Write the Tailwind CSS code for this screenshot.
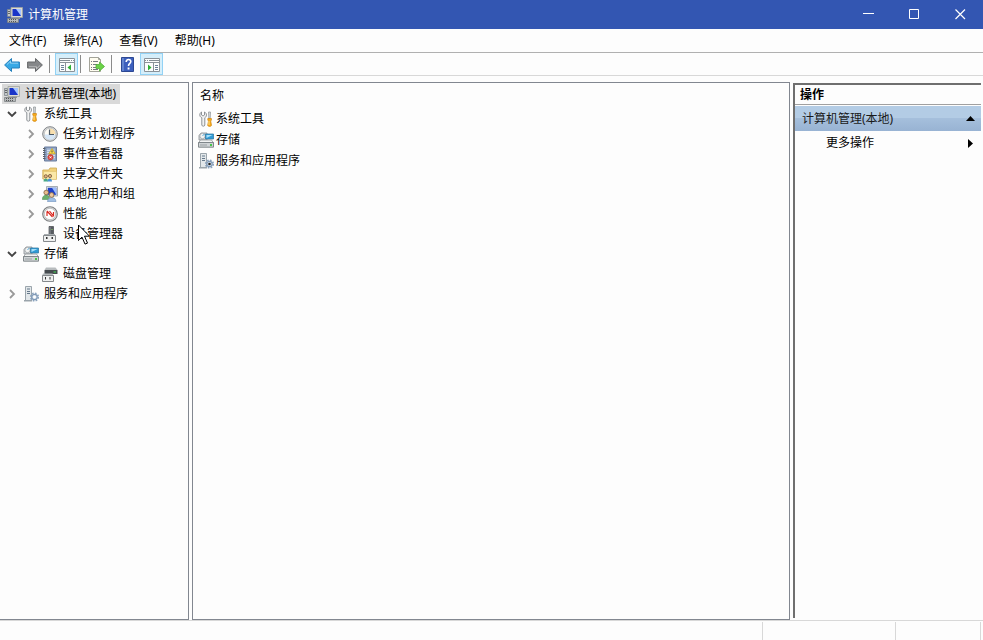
<!DOCTYPE html>
<html lang="zh-CN">
<head>
    <meta charset="UTF-8">
    <meta name="viewport" content="width=device-width, initial-scale=1.0">
    <title>计算机管理</title>
    <script src="https://cdn.jsdelivr.net/npm/@tailwindcss/browser@4"></script>
    <style>
        body { font-family: 'Noto Sans', 'Noto Sans CJK SC', sans-serif; }
    </style>
</head>
<body class="h-screen flex flex-col overflow-hidden bg-[#fdfdfd] text-black text-xs leading-5 cursor-default select-none">

    <!-- Icon set -->
    <svg class="hidden">
        <symbol id="computer" viewBox="0 0 16 16">
            <path d="M.5 2.500h3v7h-3z" fill="#c3c8cb" stroke="#7d858b" stroke-width=".8"/>
            <path d="M1 4.500h2M1 6.500h2" stroke="#666"/>
            <path d="M4 .5h11.500v10H4z" fill="#dddcd2" stroke="#a0a39f" stroke-width=".8"/>
            <path d="M5.500 2h8.500v7H5.500z" fill="#1a35c8"/>
            <path d="M9 2h5v7z" fill="#a3c4ff"/>
            <path d="M8 10.500h5v1.500H8z" fill="#999"/>
            <path d="M.5 11.500h11v4H.5z" fill="#b4b8ba" stroke="#7b8083" stroke-width=".8"/>
            <path d="M2 12.500h1m1 0h1m1 0h1m1 0h1M2 14.500h1m1 0h1m1 0h1m1 0h1" stroke="#555"/>
        </symbol>
        <symbol id="tools" viewBox="0 0 16 16">
            <path d="M3.500 1v3l1.500 1 1.500-1V1C8 1.800 8.500 2.800 8.500 4S7.700 6.300 6.800 6.800V14c0 1.600-3 1.600-3 0V6.800C2.500 6.200 1.800 5.200 1.800 4S2.200 1.800 3.500 1z" fill="#f1f2f2" stroke="#83888c" stroke-width=".9"/>
            <path d="M10.500 1h2l-.3 6.500h-1.400z" fill="#d8dbdd" stroke="#8b9094" stroke-width=".7"/>
            <path d="M9.800 7.500h3.600V9l-.7 1 .8 4.300c0 1.500-3.800 1.500-3.800 0l.8-4.300-.7-1z" fill="#f9ac1c" stroke="#cd8411" stroke-width=".7"/>
            <path d="M11 10v4" stroke="#ffe08a"/>
        </symbol>
        <symbol id="clock" viewBox="0 0 16 16">
            <circle cx="8" cy="8" r="7.300" fill="#dcdedf" stroke="#808487"/>
            <circle cx="8" cy="8" r="5.700" fill="#fffdf6" stroke="#aaadaf" stroke-width=".6"/>
            <path d="M8 8.500h5.300A5.300 5.300 0 0 1 2.700 8.500z" fill="#d5e6f6"/>
            <path d="M8 8V2.500A5.500 5.500 0 0 1 13.500 8z" fill="#f8dfae"/>
            <path d="M7.500 3.500v5H12" fill="none" stroke="#4c5964" stroke-width="1.200"/>
        </symbol>
        <symbol id="events" viewBox="0 0 16 16">
            <path d="M2.500 1h12v14h-12z" fill="#8ba1c2" stroke="#6b7d9d"/>
            <path d="M5 2.500h8v11H5z" fill="#a9bbd6"/>
            <path d="M5 4.500h4M5 6.500h3M5 9.500h8M5 11.500h8" stroke="#dce6f3" stroke-width=".8"/>
            <path d="M1 2.500h2.500M1 4.500h2.500M1 6.500h2.500M1 8.500h2.500M1 10.500h2.500M1 12.500h2.500" stroke="#596069"/>
            <path d="M10 2.500l3.300 5.300H6.700z" fill="#ffdf45" stroke="#c7a11b" stroke-width=".7"/>
            <path d="M10 4.500v2" stroke="#444"/>
            <circle cx="8.500" cy="11.300" r="2.700" fill="#df453d" stroke="#b52c26" stroke-width=".5"/>
            <path d="M7.500 10.300l2 2m0-2l-2 2" stroke="#fff" stroke-width=".9"/>
        </symbol>
        <symbol id="shared" viewBox="0 0 16 16">
            <path d="M.8 4h6l1.200-2h6.500v11H.8z" fill="#f1d17a" stroke="#cda850" stroke-width=".8"/>
            <path d="M1.500 5.500h13v8h-13z" fill="#fbe8a8" stroke="#d9ba67" stroke-width=".5"/>
            <path d="M1.500 15.500c0-4 4.500-4 4.500 0z" fill="#49a985"/>
            <path d="M5.500 15.500c0-4 4.500-4 4.500 0z" fill="#4a93d6"/>
            <circle cx="3.800" cy="10.300" r="1.600" fill="#e3b17c" stroke="#75583a" stroke-width=".8"/>
            <circle cx="8" cy="10" r="1.600" fill="#e3b17c" stroke="#75583a" stroke-width=".8"/>
        </symbol>
        <symbol id="users" viewBox="0 0 16 16">
            <path d="M4.500.5h11v9.500h-11z" fill="#dde1e5" stroke="#929ca5" stroke-width=".8"/>
            <path d="M5.800 1.800h8.500v7H5.800z" fill="#1e40c8"/>
            <path d="M10 1.800h4.300v7z" fill="#9bbdfb"/>
            <path d="M.3 13.500c0-6 7.500-6 7.500 0z" fill="#6bb06c" stroke="#46844b" stroke-width=".5"/>
            <circle cx="4.200" cy="6.500" r="2.300" fill="#e8bd8c" stroke="#80603f" stroke-width=".8"/>
            <path d="M5.500 15.700c0-5.500 8.500-5.500 8.500 0z" fill="#a0bfe4" stroke="#6385ae" stroke-width=".5"/>
            <circle cx="9.600" cy="9" r="2.400" fill="#ecc79c" stroke="#80603f" stroke-width=".8"/>
        </symbol>
        <symbol id="perf" viewBox="0 0 16 16">
            <circle cx="8" cy="8" r="7.300" fill="#e3e4e4" stroke="#7a7d7f" stroke-width="1.100"/>
            <circle cx="8" cy="8" r="5.700" fill="#fff" stroke="#a0a2a3" stroke-width=".6"/>
            <path d="M5 10V5.500M5 5l5.500 6M7.500 5l4 5M11.500 6v4.500" fill="none" stroke="#da2a22" stroke-width="1.200"/>
        </symbol>
        <symbol id="device" viewBox="0 0 16 16">
            <path d="M7 .5h4.500v9H7z" fill="#565b60" stroke="#34383b" stroke-width=".6"/>
            <path d="M7.500 1h1v8h-1z" fill="#8b9298"/>
            <path d="M9.500 3h1v1h-1z" fill="#8fdf63"/>
            <path d="M2 8h11v2H2z" fill="#a8adb0"/>
            <path d="M1.500 9.500h12v6h-12z" fill="#eff0f0" stroke="#85898c"/>
            <path d="M4 11h1.500v2H4zM9.500 11H11v2H9.500z" fill="#333"/>
        </symbol>
        <symbol id="storage" viewBox="0 0 16 16">
            <path d="M1 3.500L3 1h6v7H1z" fill="#dadddf" stroke="#858c90" stroke-width=".8"/>
            <circle cx="4.500" cy="4" r="2.700" fill="#f2f3f3" stroke="#92989b" stroke-width=".7"/>
            <path d="M4.500 4l2-2.300" stroke="#5fb1dd"/>
            <path d="M7.500 2h8v5h-8z" fill="#2e9bd6" stroke="#347ba5" stroke-width=".8"/>
            <path d="M8.500 3h6L8.500 6z" fill="#a5dff9"/>
            <path d="M2.500 8h11l2 3h-15z" fill="#f3f4f4" stroke="#858b8e" stroke-width=".7"/>
            <path d="M.5 10.500h15v4.700H.5z" fill="#d0d4d6" stroke="#777e82" stroke-width=".9"/>
            <path d="M2 13h7" stroke="#9ba1a4"/>
            <path d="M12 12h2v2h-2z" fill="#47c649"/>
        </symbol>
        <symbol id="disk" viewBox="0 0 16 16">
            <path d="M4 1.500h9.500L15.500 4H2.500z" fill="#b8bcbe"/>
            <path d="M2.500 4h13v4h-13z" fill="#464b4f"/>
            <path d="M11.500 5.500H14v1h-2.500z" fill="#43dc55"/>
            <path d="M1 7.500h9.500l1 2.500H0z" fill="#b4b9bb"/>
            <path d="M.5 9.500h11v6H.5z" fill="#eff0f0" stroke="#85898c"/>
            <path d="M3 11h1v2.500H3zM7.500 11h1v2.500h-1z" fill="#333"/>
        </symbol>
        <symbol id="services" viewBox="0 0 16 16">
            <path d="M2.500.5h6v14h-6z" fill="#e2e7ea" stroke="#919ca4" stroke-width=".9"/>
            <path d="M4 3h3M4 5.500h3M4 7.500h3" stroke="#65788a"/>
            <path d="M1 14h8v1.500H1z" fill="#9aa4ab"/>
            <circle cx="11.500" cy="11" r="3.800" fill="none" stroke="#8ca4bf" stroke-width="1.600" stroke-dasharray="1.700 1.280"/>
            <circle cx="11.500" cy="11" r="2.700" fill="#e2eaf3" stroke="#7f99b6" stroke-width="1.200"/>
            <circle cx="11.500" cy="11" r="1.300" fill="currentColor"/>
        </symbol>
        <symbol id="arrow" viewBox="0 0 16 16">
            <path d="M.6 8L7.500 1.500v3.500h7.900v6H7.500v3.500z" stroke-width="1" stroke-linejoin="round"/>
            <path d="M3 7.500l3.500-3.300v2h7.500" fill="none" stroke="#fff" stroke-opacity=".45"/>
        </symbol>
        <symbol id="pane" viewBox="0 0 16 16">
            <path d="M.5 1.500h15v13H.5z" fill="#fcfdfd" stroke="#8a9299"/>
            <path d="M1 3.500h10" stroke="#848d95"/>
            <path d="M12 3.500h1m1 0h1" stroke="#848d95"/>
            <path d="M1 5.500h14" stroke="#8a9299"/>
            <path d="M6.500 6v8" stroke="#8a9299"/>
            <path d="M2 8.500h3M2 10.500h3M2 12.500h3" stroke="#6c8099"/>
            <path d="M12 7.500v6L8.500 10.500z" fill="#2fb034"/>
        </symbol>
        <symbol id="chevron" viewBox="0 0 10 10">
            <path d="M3 1l4 4-4 4" fill="none" stroke="currentColor" stroke-width="1.800"/>
        </symbol>
    </svg>

    <!-- Title bar -->
    <header class="h-[29px] shrink-0 flex items-center bg-[#3356b2] text-white">
        <svg class="size-4 ml-[7px] mr-[5px]"><use href="#computer"/></svg>
        <h1 class="flex-1">计算机管理</h1>
        <button aria-label="最小化" class="w-[45px] h-full flex items-center justify-center">
            <svg class="size-[11px]" viewBox="0 0 11 11"><path d="M0 4.500h11" stroke="#fff"/></svg>
        </button>
        <button aria-label="最大化" class="w-[46px] h-full flex items-center justify-center">
            <svg class="size-[11px]" viewBox="0 0 11 11"><path d="M.5.5h9v9h-9z" fill="none" stroke="#fff"/></svg>
        </button>
        <button aria-label="关闭" class="w-[46px] h-full flex items-center justify-center">
            <svg class="size-[11px]" viewBox="0 0 11 11"><path d="M.5.5l9.500 9.500m0-9.500l-9.500 9.500" stroke="#fff" stroke-width="1.200"/></svg>
        </button>
    </header>

    <!-- Menu bar -->
    <nav class="h-6 shrink-0 flex items-center gap-[17px] px-[9px] border-b border-[#b0b0b0]">
        <button>文件(F)</button>
        <button>操作(A)</button>
        <button>查看(V)</button>
        <button>帮助(H)</button>
    </nav>

    <!-- Toolbar -->
    <div class="h-[23px] shrink-0 flex items-center pl-1 border-b border-[#d8d8d8]">
        <button aria-label="后退" class="mr-[7px] pt-0.5"><svg class="size-4" fill="#38a9e6" stroke="#2580bd"><use href="#arrow"/></svg></button>
        <button aria-label="前进" class="pt-0.5"><svg class="size-4 rotate-180" fill="#858789" stroke="#67696b"><use href="#arrow"/></svg></button>
        <span class="w-px h-[18px] ml-1.5 mr-[5px] bg-[#8b8b8b]"></span>
        <button aria-label="显示/隐藏控制台树" class="w-[23px] h-[22px] pt-0.5 flex items-center justify-center bg-[#d5eefa] border border-[#92d2f5]">
            <svg class="size-4"><use href="#pane"/></svg>
        </button>
        <span class="w-px h-[18px] ml-0.5 mr-2 bg-[#8b8b8b]"></span>
        <button aria-label="导出列表" class="pt-0.5">
            <svg class="size-4" viewBox="0 0 16 16">
                <path d="M.5.5h9l2 2v12H.5z" fill="#fffdf0" stroke="#a3a399"/>
                <path d="M9.500.5v2h2" fill="none" stroke="#a3a399"/>
                <path d="M2 4.500h1m1 0h5M2 7.500h1m1 0h4M2 10.500h1m1 0h4M2 12.500h1m1 0h5" stroke="#777a80"/>
                <path d="M7 7.500h3.500V5l5 4.500-5 4.500v-2.500H7z" fill="#6bd347" stroke="#50ad37" stroke-width=".8"/>
            </svg>
        </button>
        <span class="w-px h-[18px] ml-1.5 mr-2 bg-[#8b8b8b]"></span>
        <button aria-label="帮助" class="pt-0.5">
            <svg class="size-4" viewBox="0 0 16 16">
                <path d="M1.500.5h12v14h-12z" fill="#3c5fbd" stroke="#2d4893"/>
                <path d="M2 1h2v13H2z" fill="#6384cf"/>
                <path d="M6.200 5c0-3.200 4.600-3.100 4.600-.6 0 2-2.300 2-2.300 4.600" fill="none" stroke="#fff" stroke-width="1.600"/>
                <path d="M7.600 10.500h1.900v2H7.600z" fill="#fff"/>
            </svg>
        </button>
        <button aria-label="显示/隐藏操作窗格" class="ml-1 w-[23px] h-[22px] pt-0.5 flex items-center justify-center bg-[#d5eefa] border border-[#92d2f5]">
            <svg class="size-4 -scale-x-100"><use href="#pane"/></svg>
        </button>
    </div>

    <main class="flex-1 min-h-0 flex pt-1.5">
        <!-- Console tree -->
        <nav class="w-[189px] shrink-0 border-t border-r border-b border-[#828790] pt-px">
            <ul>
                <li>
                    <div class="h-5 flex"><span class="h-5 flex items-center ml-0.5 pl-0.5 pr-1 gap-[5px] bg-[#d9d9d9]"><svg class="size-4"><use href="#computer"/></svg>计算机管理(本地)</span></div>
                    <ul>
                        <li>
                            <div class="h-5 flex items-center pl-[7px]"><svg class="size-2.5 mr-1.5 rotate-90 text-[#444]"><use href="#chevron"/></svg><svg class="size-4 mr-[5px]"><use href="#tools"/></svg>系统工具</div>
                            <ul>
                                <li class="h-5 flex items-center pl-[26px]"><svg class="size-2.5 mr-1.5 text-[#999]"><use href="#chevron"/></svg><svg class="size-4 mr-[5px]"><use href="#clock"/></svg>任务计划程序</li>
                                <li class="h-5 flex items-center pl-[26px]"><svg class="size-2.5 mr-1.5 text-[#999]"><use href="#chevron"/></svg><svg class="size-4 mr-[5px]"><use href="#events"/></svg>事件查看器</li>
                                <li class="h-5 flex items-center pl-[26px]"><svg class="size-2.5 mr-1.5 text-[#999]"><use href="#chevron"/></svg><svg class="size-4 mr-[5px]"><use href="#shared"/></svg>共享文件夹</li>
                                <li class="h-5 flex items-center pl-[26px]"><svg class="size-2.5 mr-1.5 text-[#999]"><use href="#chevron"/></svg><svg class="size-4 mr-[5px]"><use href="#users"/></svg>本地用户和组</li>
                                <li class="h-5 flex items-center pl-[26px]"><svg class="size-2.5 mr-1.5 text-[#999]"><use href="#chevron"/></svg><svg class="size-4 mr-[5px]"><use href="#perf"/></svg>性能</li>
                                <li class="h-5 flex items-center pl-[42px]"><svg class="size-4 mr-[5px]"><use href="#device"/></svg>设备管理器</li>
                            </ul>
                        </li>
                        <li>
                            <div class="h-5 flex items-center pl-[7px]"><svg class="size-2.5 mr-1.5 rotate-90 text-[#444]"><use href="#chevron"/></svg><svg class="size-4 mr-[5px]"><use href="#storage"/></svg>存储</div>
                            <ul>
                                <li class="h-5 flex items-center pl-[42px]"><svg class="size-4 mr-[5px]"><use href="#disk"/></svg>磁盘管理</li>
                            </ul>
                        </li>
                        <li class="h-5 flex items-center pl-[7px]"><svg class="size-2.5 mr-1.5 text-[#999]"><use href="#chevron"/></svg><svg class="size-4 mr-[5px] text-white"><use href="#services"/></svg>服务和应用程序</li>
                    </ul>
                </li>
            </ul>
        </nav>

        <!-- Result list -->
        <section class="flex-1 min-w-0 ml-[3px] border border-[#828790] pt-px">
            <table class="w-full text-left">
                <thead>
                    <tr class="h-6"><th class="font-normal pl-[7px]">名称</th></tr>
                </thead>
                <tbody>
                    <tr class="h-[21px]"><td class="pl-[5px]"><div class="flex items-center gap-0.5"><svg class="size-4"><use href="#tools"/></svg>系统工具</div></td></tr>
                    <tr class="h-[21px]"><td class="pl-[5px]"><div class="flex items-center gap-0.5"><svg class="size-4"><use href="#storage"/></svg>存储</div></td></tr>
                    <tr class="h-[21px]"><td class="pl-[5px]"><div class="flex items-center gap-0.5"><svg class="size-4 text-[#222]"><use href="#services"/></svg>服务和应用程序</div></td></tr>
                </tbody>
            </table>
        </section>

        <!-- Actions -->
        <aside class="w-[188px] shrink-0 ml-[3px] mr-0.5 mt-px mb-0.5 border-t-2 border-l-2 border-[#6f6f6f]">
            <h2 class="h-5 px-[5px] font-bold border-b border-[#a0a0a0]">操作</h2>
            <button class="w-full h-[25px] mt-px pl-[7px] pr-1.5 flex items-center justify-between text-[#1a1a1a] bg-linear-to-b from-[#b3cce5] from-50% via-[#a5bfdc] via-50% to-[#98b3d3]">
                计算机管理(本地)
                <svg class="w-[9px] h-[5px]" viewBox="0 0 9 5"><path d="M4.500 0L9 5H0z"/></svg>
            </button>
            <button class="w-full h-6 pl-[31px] pr-2 flex items-center justify-between">
                更多操作
                <svg class="w-[5px] h-[9px]" viewBox="0 0 5 9"><path d="M0 0l5 4.500L0 9z"/></svg>
            </button>
        </aside>
    </main>

    <!-- Status bar -->
    <footer class="h-5 shrink-0 flex justify-end pt-px pr-0.5 border-t border-[#d8d8d8]">
        <span class="w-[133px] border-l border-[#d8d8d8]"></span>
        <span class="w-[86px] border-l border-r border-[#d8d8d8]"></span>
    </footer>

    <!-- Mouse pointer -->
    <svg class="absolute left-[78px] top-[224px] w-3 h-[21px] pointer-events-none" viewBox="0 0 12 21">
        <path d="M.5 1v15.500l3.500-3.400 3 7 2.500-1-3-6.900h5z" fill="#fff" stroke="#000"/>
    </svg>

</body>
</html>
